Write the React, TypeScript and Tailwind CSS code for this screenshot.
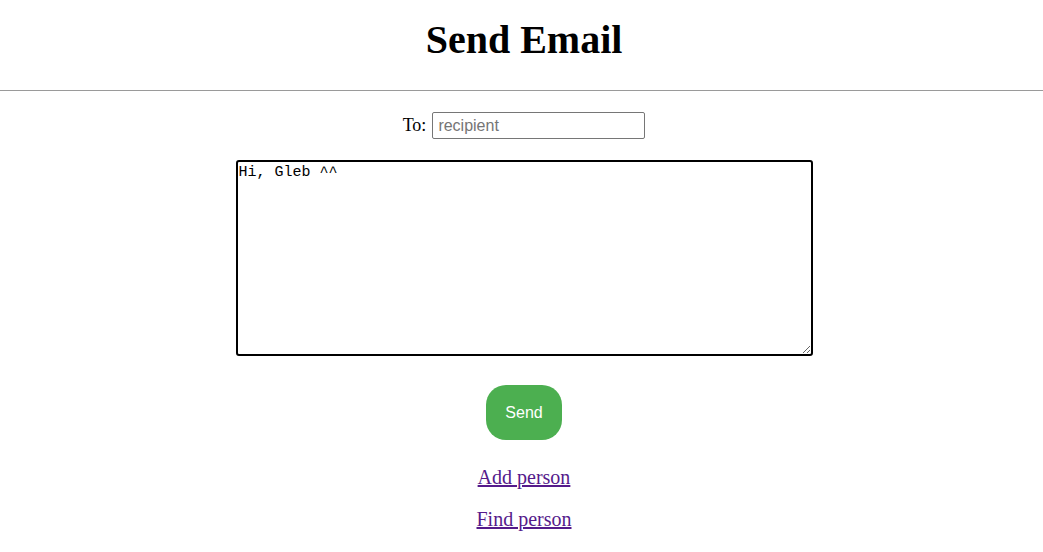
import React, { useEffect, useRef } from "react";

export default function App() {
  const ref = useRef<HTMLTextAreaElement>(null);
  useEffect(() => {
    const t = ref.current;
    if (t) {
      t.focus();
      const n = t.value.length;
      t.setSelectionRange(n, n);
    }
  }, []);
  return (
    <div className="w-[1043px] min-h-[552px] pl-[5px] bg-white text-black font-['Liberation_Serif',serif]">
      <h1 className="pt-[17px] text-center text-[40px] leading-[46px] font-bold">Send Email</h1>
      <div className="mt-[27px] ml-[-5px] h-px bg-[#9a9a9a]" />
      <div className="mt-[21px] flex items-center justify-center">
        <span className="text-[18px] leading-[21px] mr-[6px]">To:</span>
        <input
          placeholder="recipient"
          className="w-[213px] h-[27px] border border-[#767676] rounded-[2px] px-[5px] text-[16px] font-['Liberation_Sans',Arial,sans-serif] placeholder:text-[#757575] outline-none"
        />
      </div>
      <div className="mt-[21px] flex justify-center">
        <textarea
          ref={ref}
          defaultValue="Hi, Gleb ^^"
          className="w-[577px] h-[196px] border-2 border-black rounded-[3px] px-[1px] pt-[2px] text-[15px] leading-[18px] font-['Liberation_Mono',monospace] outline-none resize-y block"
        />
      </div>
      <div className="mt-[29px] flex justify-center">
        <button className="w-[76px] h-[55px] rounded-[20px] bg-[#4CAF50] text-white text-[16px] font-['Liberation_Sans',Arial,sans-serif]">
          Send
        </button>
      </div>
      <div className="mt-[26px] flex flex-col items-center text-[20px] leading-[23px]">
        <a href="#" className="text-[#551A8B] underline">Add person</a>
        <a href="#" className="mt-[19px] text-[#551A8B] underline">Find person</a>
      </div>
    </div>
  );
}
